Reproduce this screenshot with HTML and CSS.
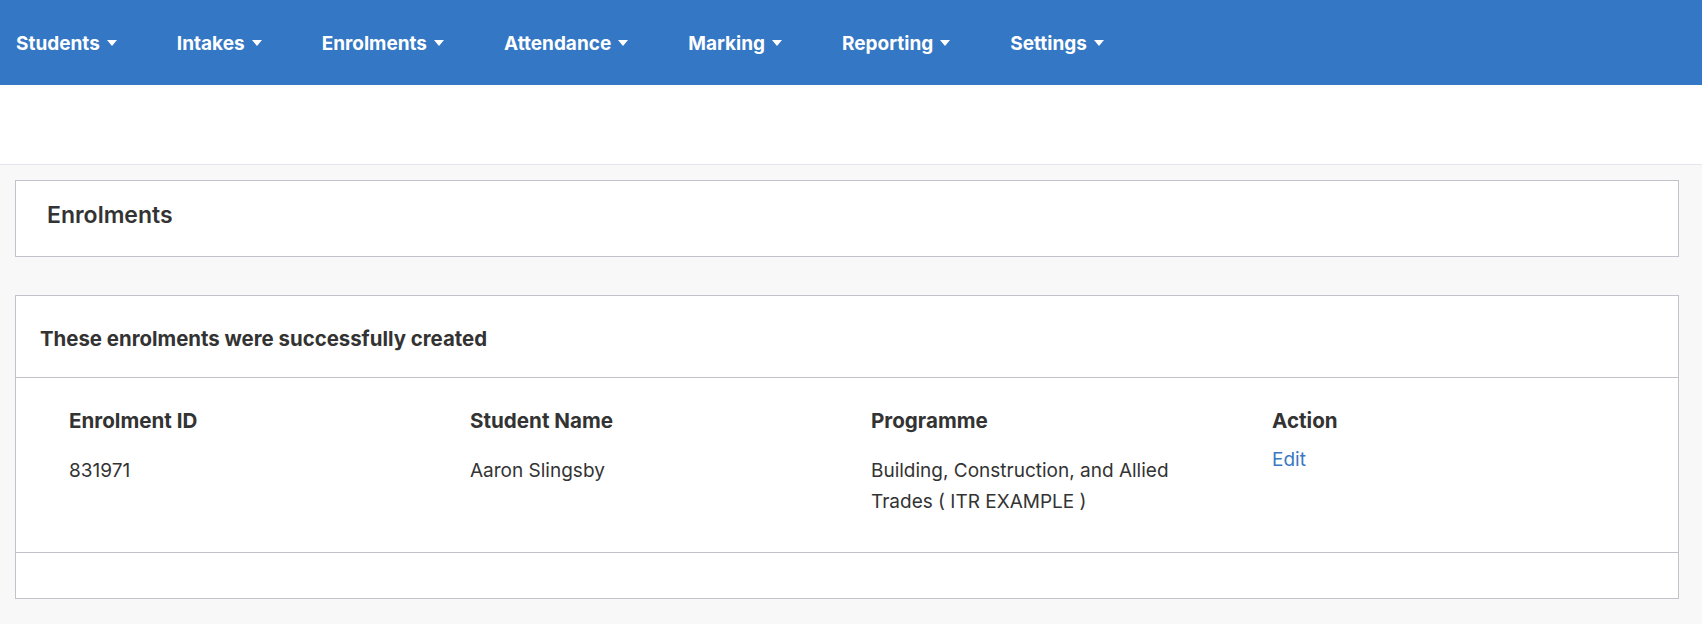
FILE: index.html
```html
<!DOCTYPE html>
<html lang="en">
<head>
<meta charset="utf-8">
<title>Enrolments</title>
<link rel="stylesheet" href="styles.css">
</head>
<body>
<nav class="navbar">
  <a class="nav-link">Students</a>
  <a class="nav-link">Intakes</a>
  <a class="nav-link">Enrolments</a>
  <a class="nav-link">Attendance</a>
  <a class="nav-link">Marking</a>
  <a class="nav-link">Reporting</a>
  <a class="nav-link">Settings</a>
</nav>
<div class="subbar"></div>
<main class="content">
  <section class="card title-card">
    <h4 class="page-title">Enrolments</h4>
  </section>
  <section class="card result-card">
    <header class="card-header">These enrolments were successfully created</header>
    <div class="card-body">
      <div class="table">
        <div class="th">Enrolment ID</div>
        <div class="th">Student Name</div>
        <div class="th">Programme</div>
        <div class="th">Action</div>
        <div class="td">831971</div>
        <div class="td">Aaron Slingsby</div>
        <div class="td">Building, Construction, and Allied Trades ( ITR EXAMPLE )</div>
        <div class="td action"><a class="link">Edit</a></div>
      </div>
    </div>
    <footer class="card-footer"></footer>
  </section>
</main>
</body>
</html>
```
FILE: styles.css
```css
* { box-sizing: border-box; }
html, body { margin: 0; padding: 0; }
body {
  font-family: Inter, Roboto, "Liberation Sans", Arial, sans-serif;
  font-size: 19px;
  line-height: 1.5;
  color: #333333;
  background: #f8f8f8;
}
.navbar {
  height: 85px;
  background: #3477c4;
  display: flex;
  align-items: center;
  gap: 60px;
  padding: 0 0 0 16px;
}
.nav-link {
  color: #ffffff;
  font-weight: 700;
  font-size: 19px;
  line-height: 1;
  margin-top: 2px;
  white-space: nowrap;
}
.nav-link::after {
  content: "";
  display: inline-block;
  margin-left: 7px;
  vertical-align: 4px;
  border-top: 6px solid #ffffff;
  border-left: 5px solid transparent;
  border-right: 5px solid transparent;
}
.subbar {
  height: 80px;
  background: #ffffff;
  border-bottom: 1px solid #e3e6ea;
}
.content {
  padding: 15px 23px 0 15px;
}
.card {
  background: #ffffff;
  border: 1px solid #c2c3c9;
}
.title-card {
  height: 77px;
  display: flex;
  align-items: center;
  padding: 0 0 6px 31px;
}
.page-title {
  margin: 0;
  font-size: 23px;
  font-weight: 600;
  line-height: 1.2;
  color: #333333;
}
.result-card {
  margin-top: 38px;
}
.card-header {
  height: 82px;
  display: flex;
  align-items: center;
  padding: 6px 0 0 24px;
  font-weight: 700;
  font-size: 20.4px;
  border-bottom: 1px solid #c2c3c9;
}
.card-body {
  height: 175px;
  padding: 28px 5px 0 53px;
  border-bottom: 1px solid #c2c3c9;
}
.table {
  display: grid;
  grid-template-columns: repeat(4, 1fr);
  row-gap: 20px;
}
.th {
  font-weight: 700;
  font-size: 20.6px;
  line-height: 29px;
}
.td {
  line-height: 31px;
  padding-right: 50px;
}
.td.action {
  margin-top: -11px;
}
.link {
  color: #3b78c2;
  text-decoration: none;
}
.card-footer {
  height: 45px;
}
```
